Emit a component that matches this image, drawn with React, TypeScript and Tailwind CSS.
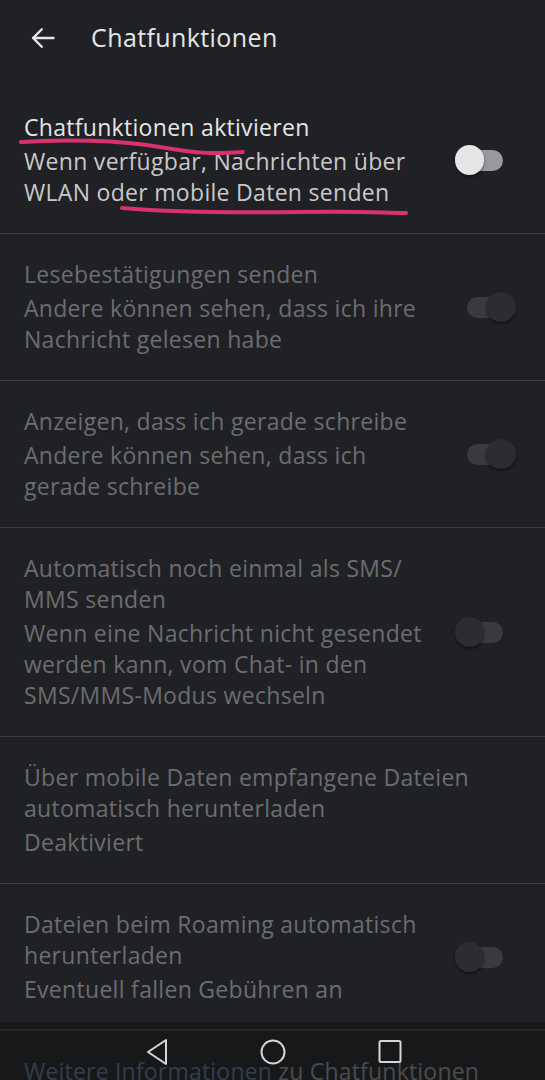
import type { ReactNode } from 'react'

const font = { fontFamily: '"Open Sans", "Noto Sans", sans-serif' }

function Toggle({ on, disabled }: { on: boolean; disabled: boolean }) {
  const track = disabled ? 'bg-[#3a3b3e]' : 'bg-[#9a9a9c]'
  const thumb = disabled ? 'bg-[#2c2d30]' : 'bg-[#e6e6e6]'
  return (
    <div className="relative w-[62px] h-[30px] shrink-0">
      {on ? (
        <>
          <div className={`absolute left-[12px] top-[5px] w-[44px] h-[21px] rounded-full ${track}`} />
          <div className={`absolute left-[31px] top-0 w-[30px] h-[30px] rounded-full shadow-[0_2px_3px_rgba(0,0,0,0.45)] ${thumb}`} />
        </>
      ) : (
        <>
          <div className={`absolute left-[7px] top-[5px] w-[41px] h-[21px] rounded-full ${track}`} />
          <div className={`absolute left-0 top-0 w-[29px] h-[30px] rounded-full shadow-[0_2px_3px_rgba(0,0,0,0.45)] ${thumb}`} />
        </>
      )}
    </div>
  )
}

function Row({
  title,
  desc,
  toggle,
  disabled,
  first,
}: {
  title: ReactNode
  desc: ReactNode
  toggle?: 'on' | 'off'
  disabled: boolean
  first?: boolean
}) {
  return (
    <div
      className={`flex items-center pl-6 pr-[28px] pb-[25px] ${first ? 'pt-[36px]' : 'pt-[25px] border-t border-[#3b3c3f]'}`}
    >
      <div className="flex-1 text-[23px] tracking-[0.3px] whitespace-nowrap">
        <div className={`leading-[31px] ${disabled ? 'text-[#6c6d70]' : 'text-[#e6e6e6]'}`}>{title}</div>
        <div className={`mt-[3px] leading-[31px] ${disabled ? 'text-[#6c6d70]' : 'text-[#c9c9ca]'}`}>{desc}</div>
      </div>
      {toggle && <Toggle on={toggle === 'on'} disabled={disabled} />}
    </div>
  )
}

export default function App() {
  return (
    <div className="relative w-[545px] h-[1080px] overflow-hidden bg-[#202124]" style={font}>
      {/* header */}
      <div className="h-[76px] flex items-center">
        <svg className="ml-[29px] w-[28px] h-[28px]" viewBox="0 0 24 24" fill="none" stroke="#e6e6e6" strokeWidth="2.1" strokeLinecap="round" strokeLinejoin="round">
          <path d="M21 12H3.5M11 4.5 3.5 12l7.5 7.5" />
        </svg>
        <div className="ml-[34px] text-[25px] tracking-[0.4px] text-[#e6e6e6]">Chatfunktionen</div>
      </div>

      <Row
        first
        title="Chatfunktionen aktivieren"
        desc={<>Wenn verfügbar, Nachrichten über<br />WLAN oder mobile Daten senden</>}
        toggle="off"
        disabled={false}
      />
      <Row
        title="Lesebestätigungen senden"
        desc={<>Andere können sehen, dass ich ihre<br />Nachricht gelesen habe</>}
        toggle="on"
        disabled
      />
      <Row
        title="Anzeigen, dass ich gerade schreibe"
        desc={<>Andere können sehen, dass ich<br />gerade schreibe</>}
        toggle="on"
        disabled
      />
      <Row
        title={<>Automatisch noch einmal als SMS/<br />MMS senden</>}
        desc={<>Wenn eine Nachricht nicht gesendet<br />werden kann, vom Chat- in den<br />SMS/MMS-Modus wechseln</>}
        toggle="off"
        disabled
      />
      <Row
        title={<>Über mobile Daten empfangene Dateien<br />automatisch herunterladen</>}
        desc="Deaktiviert"
        disabled
      />
      <Row
        title={<>Dateien beim Roaming automatisch<br />herunterladen</>}
        desc="Eventuell fallen Gebühren an"
        toggle="off"
        disabled
      />
      <div className="border-t border-[#3b3c3f] pl-6 pt-[25px] text-[23px] tracking-[0.2px] leading-[31px] whitespace-nowrap">
        <span className="text-[#7f9cc4]">Weitere Informationen</span>
        <span className="text-[#c9c9ca]"> zu Chatfunktionen</span>
      </div>

      {/* hand-drawn annotation */}
      <svg className="absolute left-0 top-0 pointer-events-none" width="545" height="240" fill="none" stroke="#d9316f" strokeWidth="4" strokeLinecap="round">
        <path d="M21 142 C 60 139, 120 140, 160 147 S 215 154, 243 152" />
        <path d="M122 208 C 170 212, 230 213, 300 212 S 380 213, 406 213" />
      </svg>

      {/* system navigation bar */}
      <div className="absolute left-0 right-0 bottom-0 h-[58px] bg-[#141517]/70">
        <div className="h-[7px] bg-[#19191b]/80" />
        <div className="h-px bg-[#2b2c2f]" />
        <div className="flex items-start justify-center gap-[90px] pt-[8px] pl-[2px]">
          <svg width="24" height="28" viewBox="0 0 24 28" fill="none" stroke="#d6d6d6" strokeWidth="2" strokeLinejoin="round">
            <path d="M21 2 L3 14 L21 26 Z" />
          </svg>
          <svg width="28" height="28" viewBox="0 0 28 28" fill="none" stroke="#d6d6d6" strokeWidth="2">
            <circle cx="14" cy="14" r="11.5" />
          </svg>
          <svg width="26" height="28" viewBox="0 0 26 28" fill="none" stroke="#d6d6d6" strokeWidth="2" strokeLinejoin="round">
            <rect x="2.5" y="3" width="21" height="21" rx="1.5" />
          </svg>
        </div>
      </div>
    </div>
  )
}
